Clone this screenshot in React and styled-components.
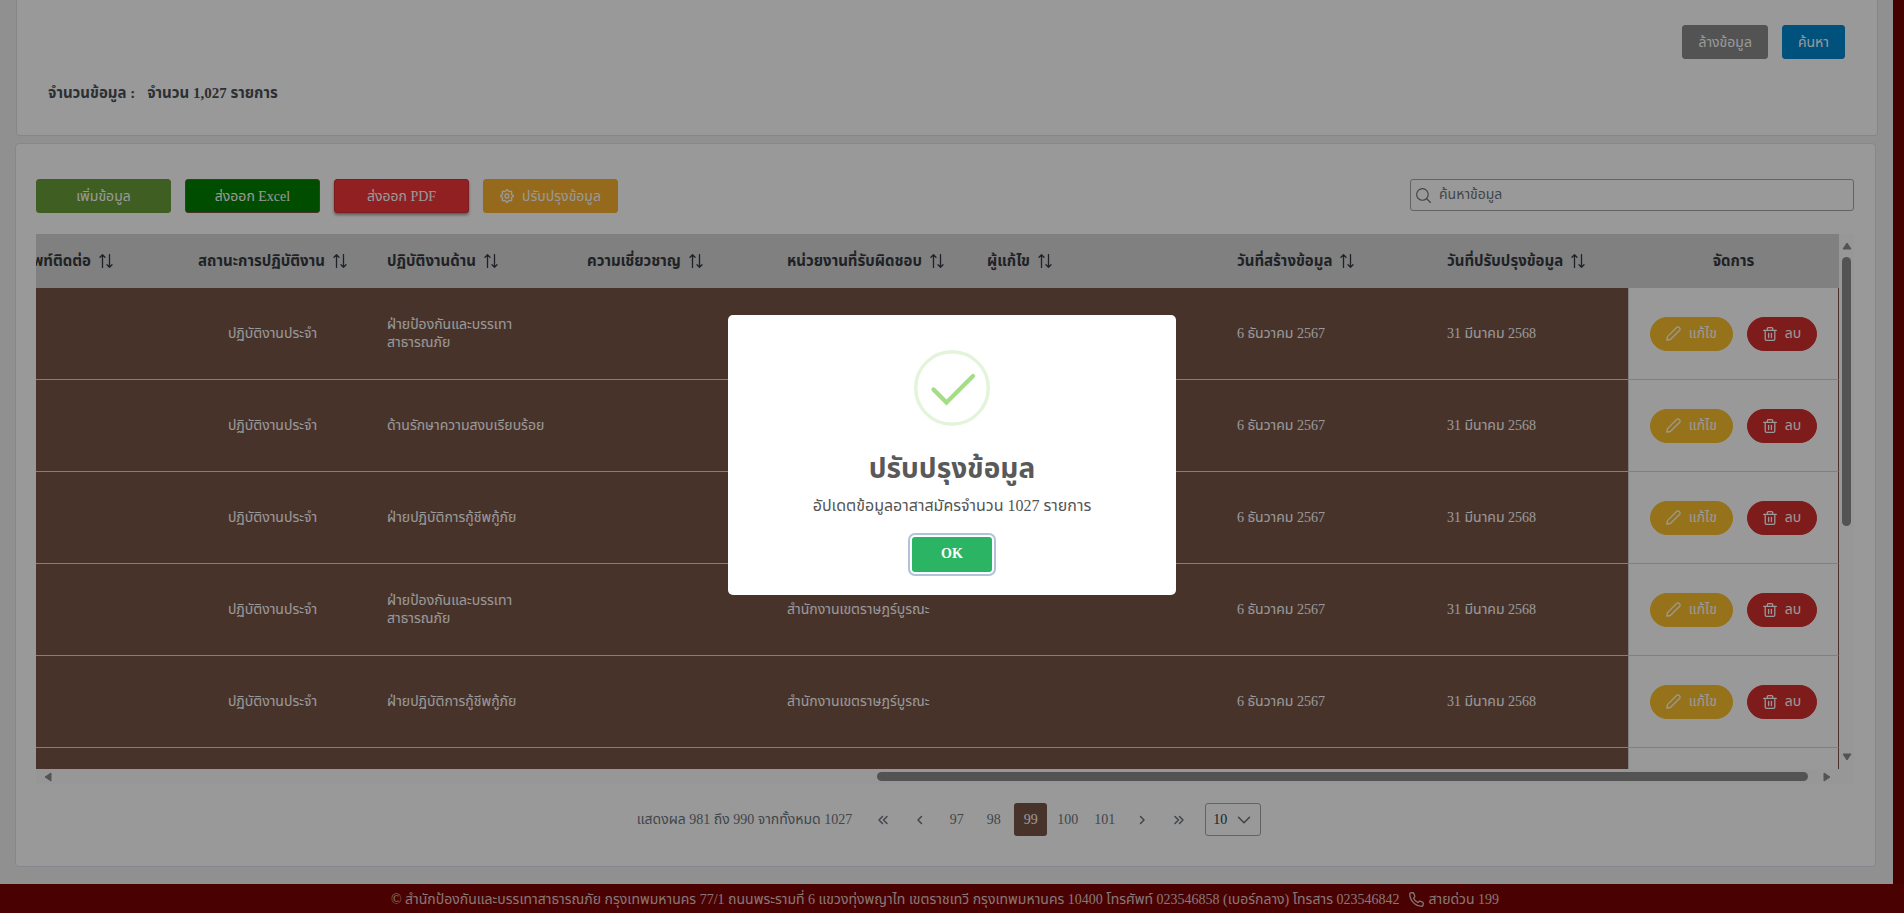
import styled, { createGlobalStyle } from "styled-components";

const GlobalStyle = createGlobalStyle`
  * {
    box-sizing: border-box;
  }
  body {
    margin: 0;
    background-color: #730000;
    font-family: "Liberation Serif", "Noto Sans Thai", serif;
    font-size: 14px;
    color: #495057;
  }
  button, input, select {
    font-family: inherit;
    font-size: 14px;
  }
  svg {
    flex-shrink: 0;
  }
`;

const Page = styled.div`
  margin-right: 11px;
  background-color: #f0f0f0;
`;

const SearchCard = styled.section`
  margin: 0 15px 7px 16px;
  padding: 25px 32px 32px 31px;
  border: 1px solid #e0e0e4;
  border-top: none;
  border-radius: 0 0 4px 4px;
  background-color: white;
`;

const SearchActions = styled.div`
  display: flex;
  justify-content: flex-end;
  gap: 14px;
`;

const Count = styled.p`
  display: flex;
  gap: 12px;
  margin: 24px 0 0;
  font-size: 15px;
  line-height: 20px;
  font-weight: bold;
`;

const TableCard = styled.section`
  margin: 0 17px 0 15px;
  padding: 35px 21px 30px 20px;
  border: 1px solid #e0e0ea;
  border-radius: 4px;
  background-color: white;
`;

const Toolbar = styled.div`
  display: flex;
  align-items: flex-start;
  gap: 14px;
  margin-bottom: 21px;
`;

const Button = styled.button`
  display: inline-flex;
  align-items: center;
  justify-content: center;
  gap: 8px;
  height: 34px;
  min-width: ${(props) => props.$width || "0"};
  padding: 0 15px;
  color: white;
  white-space: nowrap;
  background-color: ${(props) => props.$color};
  border: 1px solid ${(props) => props.$border || props.$color};
  border-radius: ${(props) => (props.$round ? "17px" : "3px")};
  box-shadow: ${(props) => (props.$raised ? "0 2px 3px rgba(0, 0, 0, 0.4)" : "none")};
`;

const SearchBox = styled.label`
  display: flex;
  align-items: center;
  gap: 8px;
  width: 444px;
  height: 32px;
  margin-left: auto;
  padding: 0 5px;
  border: 1px solid #a6a6a6;
  border-radius: 3px;
  color: #6c757d;
`;

const SearchInput = styled.input`
  flex: 1;
  padding: 0;
  border: none;
  outline: none;
  background: none;
  color: #6c757d;
  &::placeholder {
    color: #6c757d;
    opacity: 1;
  }
`;

const ScrollPanel = styled.div`
  display: grid;
  grid-template-columns: minmax(0, 1fr) 15px;
`;

const Table = styled.table`
  width: 100%;
  table-layout: fixed;
  border-collapse: separate;
  border-spacing: 0;
  color: white;
`;

const Th = styled.th`
  height: 54px;
  padding: 0 14px;
  background-color: #d5d5d5;
  color: #343a40;
  font-size: 15px;
  &:first-child {
    padding: 0 59px 0 0;
    overflow: hidden;
  }
`;

const HeadLabel = styled.div`
  display: flex;
  align-items: center;
  justify-content: ${(props) => props.$align || "flex-start"};
  gap: 8px;
  white-space: nowrap;
`;

const Td = styled.td`
  height: ${(props) => (props.$last ? "21px" : "92px")};
  padding: 0 14px;
  line-height: 18px;
  text-align: ${(props) => props.$align || "left"};
  background-color: #795548;
  border-bottom: ${(props) => (props.$last ? "none" : "1px solid #d5d5d5")};
`;

const ActionTd = styled(Td)`
  background-color: white;
  border-left: 1px solid #d5d5d5;
  border-right: 1px solid #795548;
`;

const RowActions = styled.div`
  display: flex;
  justify-content: center;
  gap: 14px;
`;

const Bar = styled.div`
  display: flex;
  flex-direction: ${(props) => (props.$vertical ? "column" : "row")};
  align-items: center;
  height: ${(props) => (props.$vertical ? "auto" : "15px")};
  padding: ${(props) => (props.$vertical ? "7px 0" : "0 7px")};
  background-color: #fcfcfc;
`;

const Corner = styled.div`
  background-color: #fcfcfc;
`;

const Track = styled.div`
  flex: 1;
  display: flex;
  flex-direction: ${(props) => (props.$vertical ? "column" : "row")};
  align-items: center;
  justify-content: ${(props) => (props.$vertical ? "flex-start" : "flex-end")};
  padding: ${(props) => (props.$vertical ? "6px 0" : "0 14px")};
`;

const Thumb = styled.div`
  width: ${(props) => (props.$vertical ? "9px" : "53.5%")};
  height: ${(props) => (props.$vertical ? "55%" : "9px")};
  border-radius: 5px;
  background-color: #8b8b8b;
`;

const Paginator = styled.nav`
  display: flex;
  align-items: center;
  justify-content: center;
  gap: 4px;
  margin-top: 19px;
  padding-left: 8px;
  color: #6c757d;
`;

const PageReport = styled.span`
  margin-right: 10px;
`;

const PageButton = styled.button`
  display: inline-flex;
  align-items: center;
  justify-content: center;
  width: 33px;
  height: 33px;
  padding: 0;
  border: none;
  border-radius: 3px;
  color: ${(props) => (props.$active ? "white" : "#6c757d")};
  background-color: ${(props) => (props.$active ? "#795548" : "transparent")};
`;

const SelectBox = styled.span`
  display: grid;
  align-items: center;
  margin-left: 6px;
  color: #6c757d;
  > * {
    grid-area: 1 / 1;
  }
  > svg {
    justify-self: end;
    margin-right: 10px;
    pointer-events: none;
  }
`;

const Select = styled.select`
  appearance: none;
  width: 56px;
  height: 33px;
  padding: 0 7px;
  border: 1px solid #a6a6a6;
  border-radius: 3px;
  background-color: white;
  color: #343a40;
`;

const Footer = styled.footer`
  display: flex;
  align-items: center;
  justify-content: center;
  gap: 10px;
  height: 30px;
  margin-top: 17px;
  margin-right: -11px;
  padding-right: 14px;
  background-color: #7a0304;
  color: #e0c8c8;
`;

const Hotline = styled.span`
  display: inline-flex;
  align-items: center;
  gap: 4px;
`;

const Overlay = styled.div`
  position: fixed;
  inset: 0;
  display: flex;
  align-items: center;
  justify-content: center;
  padding-bottom: 4px;
  background-color: rgba(0, 0, 0, 0.4);
`;

const Modal = styled.div`
  display: flex;
  flex-direction: column;
  align-items: center;
  width: 448px;
  padding: 35px 14px 23px;
  border-radius: 5px;
  background-color: white;
  color: #545454;
`;

const Title = styled.h2`
  margin: 23px 0 0;
  font-size: 28px;
  line-height: 40px;
  color: #595959;
`;

const Message = styled.p`
  margin: 5px 0 0;
  font-size: 16px;
  line-height: 24px;
`;

const ConfirmButton = styled.button`
  width: 80px;
  height: 35px;
  margin-top: 19px;
  border: none;
  border-radius: 3px;
  background-color: #2ab463;
  color: white;
  font-weight: bold;
  box-shadow: 0 0 0 2px white, 0 0 0 4px #afc3d9;
  outline: none;
`;

const Icon = ({ size = 14, width = 1.2, children }) => (
  <svg
    width={size}
    height={size}
    viewBox="0 0 14 14"
    fill="none"
    stroke="currentColor"
    strokeWidth={width}
    strokeLinecap="round"
    strokeLinejoin="round"
    aria-hidden="true"
  >
    {children}
  </svg>
);

const SortIcon = () => (
  <Icon width={1.3}>
    <path d="M3.5 13.4V.8M1 3.2 3.5.7 6 3.2M10.5.6v12.6M8 10.8l2.5 2.5 2.5-2.5" />
  </Icon>
);

const PencilIcon = () => (
  <Icon size={15}>
    <path d="M.8 13.2 1.4 9.9 10.1 1.2a1.4 1.4 0 0 1 2 0l.7.7a1.4 1.4 0 0 1 0 2L4.1 12.6Z" />
  </Icon>
);

const TrashIcon = () => (
  <Icon width={1.3}>
    <path d="M.7 3.4h12.6M2.2 3.4v8.5c0 .8.6 1.4 1.4 1.4h6.8c.8 0 1.4-.6 1.4-1.4V3.4M4.3 3.2V1.7c0-.6.4-1 1-1h3.4c.6 0 1 .4 1 1v1.5M5.6 6.3v4.2M8.4 6.3v4.2" />
  </Icon>
);

const TEETH = 8;

// each tooth takes four points round the hub
const cogPoints = Array.from({ length: TEETH * 4 }, (_, i) => {
  const angle = ((i - 0.5) / (TEETH * 4)) * Math.PI * 2;
  const radius = i % 4 < 2 ? 6.3 : 4.9;
  return `${7 + radius * Math.sin(angle)},${7 - radius * Math.cos(angle)}`;
}).join(" ");

const CogIcon = () => (
  <Icon width={1.3}>
    <circle cx="7" cy="7" r="2" />
    <polygon points={cogPoints} />
  </Icon>
);

const FindIcon = () => (
  <Icon size={15} width={1.1}>
    <circle cx="6" cy="6" r="5.4" />
    <path d="m10 10 3.5 3.5" />
  </Icon>
);

const ChevronIcon = () => (
  <Icon width={1.6}>
    <path d="m1.5 4.3 5.5 5.5 5.5-5.5" />
  </Icon>
);

const PhoneIcon = () => (
  <Icon size={15}>
    <path d="M1.6.9 3.4.7c.5 0 .9.2 1.1.7l.9 2.3c.2.4 0 .8-.2 1.1l-1 1c.9 1.8 2.2 3.1 4 4l1-1c.3-.3.7-.4 1.1-.2l2.3.9c.5.2.7.6.7 1.1l-.2 1.8c-.1.5-.5.9-1 .9C6 13.3.7 8 .7 1.9c0-.5.4-.9.9-1Z" />
  </Icon>
);

const PAGE_ICONS = {
  first: "M6.5 3.5 3 7l3.5 3.5M11 3.5 7.5 7l3.5 3.5",
  prev: "M8.5 3.5 5 7l3.5 3.5",
  next: "M5.5 3.5 9 7l-3.5 3.5",
  last: "M3 3.5 6.5 7 3 10.5M7.5 3.5 11 7l-3.5 3.5",
};

const PageArrow = ({ kind, label }) => (
  <PageButton aria-label={label}>
    <Icon width={1.5}>
      <path d={PAGE_ICONS[kind]} />
    </Icon>
  </PageButton>
);

const ARROWS = {
  up: "M1 8 5 2l4 6Z",
  down: "M1 2 5 8l4-6Z",
  left: "M8 1 2 5l6 4Z",
  right: "M2 1l6 4-6 4Z",
};

const ScrollArrow = ({ kind }) => (
  <svg width="10" height="10" viewBox="0 0 10 10" aria-hidden="true">
    <path d={ARROWS[kind]} fill="#8b8b8b" stroke="#8b8b8b" strokeLinejoin="round" />
  </svg>
);

const SuccessIcon = () => (
  <svg width="76" height="76" viewBox="0 0 76 76" fill="none" aria-hidden="true">
    <circle cx="38" cy="38" r="36.3" stroke="#a5dc86" strokeOpacity="0.3" strokeWidth="3.4" />
    <path d="m19.5 39.5 13 13L59 26" stroke="#a5dc86" strokeWidth="4.3" strokeLinecap="round" />
  </svg>
);

const columns = [
  { label: "พท์ติดต่อ", width: 136, align: "flex-end" },
  { label: "สถานะการปฏิบัติงาน", width: 201, align: "center" },
  { label: "ปฏิบัติงานด้าน", width: 200 },
  { label: "ความเชี่ยวชาญ", width: 200 },
  { label: "หน่วยงานที่รับผิดชอบ", width: 200 },
  { label: "ผู้แก้ไข" },
  { label: "วันที่สร้างข้อมูล", width: 210 },
  { label: "วันที่ปรับปรุงข้อมูล", width: 195 },
];

const rows = [
  { duty: "ฝ่ายป้องกันและบรรเทาสาธารณภัย", office: "" },
  { duty: "ด้านรักษาความสงบเรียบร้อย", office: "" },
  { duty: "ฝ่ายปฏิบัติการกู้ชีพกู้ภัย", office: "" },
  { duty: "ฝ่ายป้องกันและบรรเทาสาธารณภัย", office: "สำนักงานเขตราษฎร์บูรณะ" },
  { duty: "ฝ่ายปฏิบัติการกู้ชีพกู้ภัย", office: "สำนักงานเขตราษฎร์บูรณะ" },
];

const VolunteerTable = () => (
  <Table>
    <colgroup>
      {columns.map(({ label, width }) => (
        <col key={label} width={width} />
      ))}
      <col width={211} />
    </colgroup>
    <thead>
      <tr>
        {columns.map(({ label, align }) => (
          <Th key={label}>
            <HeadLabel $align={align}>
              {label}
              <SortIcon />
            </HeadLabel>
          </Th>
        ))}
        <Th>จัดการ</Th>
      </tr>
    </thead>
    <tbody>
      {rows.map(({ duty, office }, i) => (
        <tr key={i}>
          <Td />
          <Td $align="center">ปฏิบัติงานประจำ</Td>
          <Td>{duty}</Td>
          <Td />
          <Td>{office}</Td>
          <Td />
          <Td>6 ธันวาคม 2567</Td>
          <Td>31 มีนาคม 2568</Td>
          <ActionTd>
            <RowActions>
              <Button $color="#fbc02d" $round>
                <PencilIcon />
                แก้ไข
              </Button>
              <Button $color="#d32f2f" $round>
                <TrashIcon />
                ลบ
              </Button>
            </RowActions>
          </ActionTd>
        </tr>
      ))}
      <tr>
        <Td $last colSpan={8} />
        <ActionTd $last />
      </tr>
    </tbody>
  </Table>
);

const App = () => {
  return (
    <>
      <GlobalStyle />
      <Page>
        <SearchCard>
          <SearchActions>
            <Button $color="#8a8a8a">ล้างข้อมูล</Button>
            <Button $color="#0288d1">ค้นหา</Button>
          </SearchActions>
          <Count>
            <span>จำนวนข้อมูล :</span>
            <span>จำนวน 1,027 รายการ</span>
          </Count>
        </SearchCard>
        <TableCard>
          <Toolbar>
            <Button $width="135px" $color="#689f38">เพิ่มข้อมูล</Button>
            <Button $width="135px" $color="#008000" $border="#795548">ส่งออก Excel</Button>
            <Button $width="135px" $color="#f03639" $border="#d32f2f" $raised>ส่งออก PDF</Button>
            <Button $width="135px" $color="#f9b12f">
              <CogIcon />
              ปรับปรุงข้อมูล
            </Button>
            <SearchBox>
              <FindIcon />
              <SearchInput type="text" placeholder="ค้นหาข้อมูล" aria-label="ค้นหาข้อมูล" />
            </SearchBox>
          </Toolbar>
          <ScrollPanel>
            <VolunteerTable />
            <Bar $vertical>
              <ScrollArrow kind="up" />
              <Track $vertical>
                <Thumb $vertical />
              </Track>
              <ScrollArrow kind="down" />
            </Bar>
            <Bar>
              <ScrollArrow kind="left" />
              <Track>
                <Thumb />
              </Track>
              <ScrollArrow kind="right" />
            </Bar>
            <Corner />
          </ScrollPanel>
          <Paginator>
            <PageReport>แสดงผล 981 ถึง 990 จากทั้งหมด 1027</PageReport>
            <PageArrow kind="first" label="หน้าแรก" />
            <PageArrow kind="prev" label="ก่อนหน้า" />
            {[97, 98, 99, 100, 101].map((page) => (
              <PageButton key={page} $active={page === 99}>
                {page}
              </PageButton>
            ))}
            <PageArrow kind="next" label="ถัดไป" />
            <PageArrow kind="last" label="หน้าสุดท้าย" />
            <SelectBox>
              <Select defaultValue="10" aria-label="จำนวนแถว">
                <option>10</option>
                <option>20</option>
                <option>50</option>
              </Select>
              <ChevronIcon />
            </SelectBox>
          </Paginator>
        </TableCard>
        <Footer>
          <span>
            © สำนักป้องกันและบรรเทาสาธารณภัย กรุงเทพมหานคร 77/1 ถนนพระรามที่ 6 แขวงทุ่งพญาไท เขตราชเทวี
            กรุงเทพมหานคร 10400 โทรศัพท์ 023546858 (เบอร์กลาง) โทรสาร 023546842
          </span>
          <Hotline>
            <PhoneIcon />
            สายด่วน 199
          </Hotline>
        </Footer>
      </Page>
      <Overlay>
        <Modal role="dialog" aria-modal="true" aria-labelledby="modal-title">
          <SuccessIcon />
          <Title id="modal-title">ปรับปรุงข้อมูล</Title>
          <Message>อัปเดตข้อมูลอาสาสมัครจำนวน 1027 รายการ</Message>
          <ConfirmButton>OK</ConfirmButton>
        </Modal>
      </Overlay>
    </>
  );
};

export default App;
